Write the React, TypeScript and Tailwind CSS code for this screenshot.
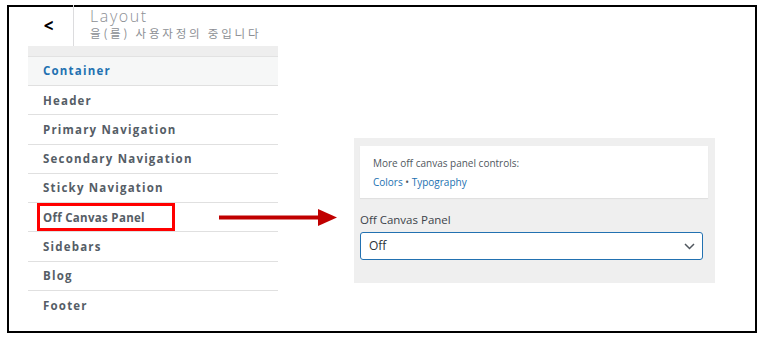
import React from "react";

const items = [
  "Header",
  "Primary Navigation",
  "Secondary Navigation",
  "Sticky Navigation",
  "Off Canvas Panel",
  "Sidebars",
  "Blog",
  "Footer",
];

export default function App() {
  return (
    <div
      className="relative w-[762px] h-[338px] bg-white pt-[5px] pl-[7px]"
      style={{ fontFamily: '"Open Sans", "Noto Sans", sans-serif' }}
    >
      <div className="w-[750px] h-[328px] border-2 border-black flex items-start">
        {/* Left panel */}
        <div className="ml-[19px] w-[250px] -mt-[2px] flex flex-col">
          <div className="flex h-[41px]">
            <div className="w-[46px] flex items-center justify-center border-r border-[#dcdcde] text-black text-[17px] font-bold leading-none pr-[4px]">
              &lt;
            </div>
            <div className="pl-[16px] pt-[2px] flex flex-col">
              <div className="text-[16px] leading-[18px] font-light text-[#8c8f94] tracking-[1.6px]">
                Layout
              </div>
              <div
                className="text-[11.5px] leading-[14px] mt-[1px] text-[#8c8f94] tracking-[2.8px]"
                style={{ fontFamily: '"Noto Sans CJK KR", "Noto Sans", sans-serif' }}
              >
                을(를) 사용자정의 중입니다
              </div>
            </div>
          </div>
          <div className="h-[11px] bg-[#eeeeee] border-b border-[#e2e2e2]" />
          <div className="h-[29px] bg-[#f6f7f7] border-b border-[#e0e0e0] flex items-center pl-[15px] text-[11.5px] font-bold text-[#2271b1] tracking-[1.2px]">
            Container
          </div>
          {items.map((label, i) => {
            const isOff = label === "Off Canvas Panel";
            return (
              <div
                key={label}
                className={
                  "relative h-[29.3px] flex items-center pl-[15px] text-[11.5px] font-bold text-[#555d66] " +
                  (isOff ? "tracking-[0.3px] " : "tracking-[1.2px] ") +
                  (i < items.length - 1 ? "border-b border-[#e0e0e0]" : "")
                }
              >
                {label}
                {isOff && (
                  <div className="absolute left-[9px] top-0 w-[138px] h-[28px] border-[3px] border-[#ff0000]" />
                )}
              </div>
            );
          })}
        </div>

        {/* Right panel */}
        <div className="ml-[76px] mt-[131px] w-[361px] h-[145px] bg-[#efefef] pt-[8px] pl-[6px] pr-[7px]">
          <div className="h-[52px] bg-white shadow-[0_1px_1px_rgba(0,0,0,0.06)] pl-[13px] pt-[9px] flex flex-col">
            <div className="text-[10px] leading-[16px] text-[#50575e]">
              More off canvas panel controls:
            </div>
            <div className="text-[10px] leading-[16px] text-[#2271b1] mt-[3px]">
              Colors <span className="text-[#50575e]">•</span> Typography
            </div>
          </div>
          <div className="mt-[14px] text-[11.5px] leading-[16px] text-[#3c434a]">
            Off Canvas Panel
          </div>
          <div className="mt-[4px] w-[343px] h-[28px] rounded-[3px] border-[1.5px] border-[#2271b1] bg-white flex items-center justify-between pl-[8px] pr-[7px]">
            <span className="text-[12px] text-[#2c3338] -mt-[1px]">Off</span>
            <svg width="11" height="7" viewBox="0 0 11 7" fill="none">
              <path d="M1 1l4.5 4.5L10 1" stroke="#50575e" strokeWidth="1.5" />
            </svg>
          </div>
        </div>
      </div>

      {/* Arrow overlay */}
      <svg
        className="absolute left-[219px] top-[208px]"
        width="120"
        height="20"
        viewBox="0 0 120 20"
      >
        <rect x="0" y="7.5" width="101" height="4" fill="#c00000" />
        <polygon points="99,1 118,9.5 99,18" fill="#c00000" />
      </svg>
    </div>
  );
}
